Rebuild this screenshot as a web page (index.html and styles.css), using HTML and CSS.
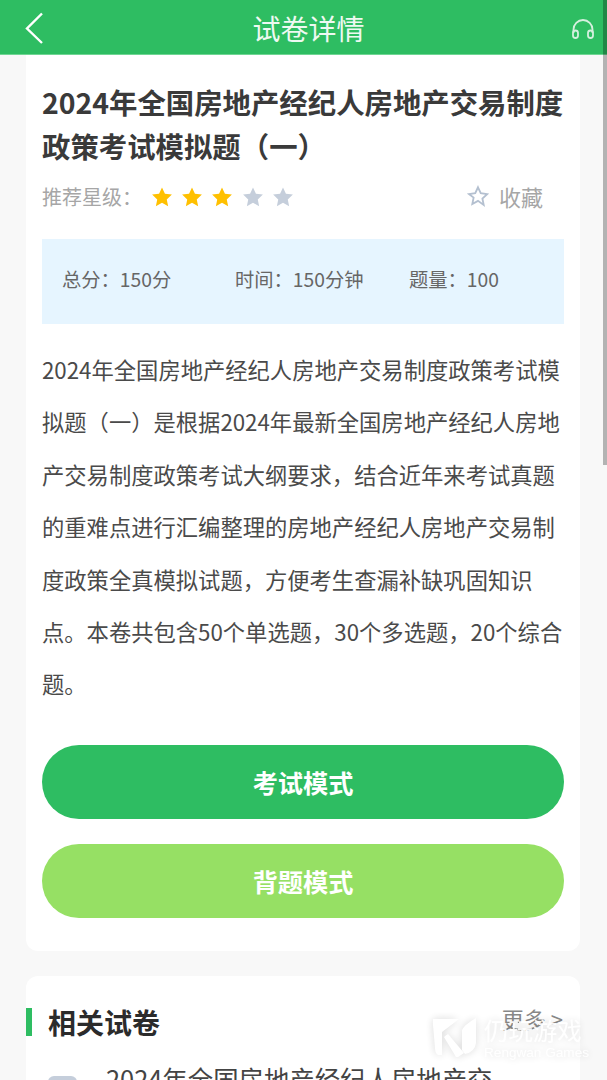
FILE: index.html
```html
<!DOCTYPE html>
<html lang="zh-CN">
<head>
  <meta charset="UTF-8" />
  <meta name="viewport" content="width=device-width, initial-scale=1.0" />
  <title>试卷详情</title>
  <link rel="stylesheet" href="styles.css">
</head>
<body>
  <div class="page">
    <header class="topbar">
      <svg class="back" width="20" height="32" viewBox="0 0 20 32"><path d="M18 1.5 3 16.5 18 31" fill="none" stroke="#fff" stroke-width="2.4"/></svg>
      <h1 class="topbar-title">试卷详情</h1>
      <svg class="headset" width="24" height="22" viewBox="0 0 24 22"><path d="M2.5 15V11.5a9.5 9.5 0 0 1 19 0V15" fill="none" stroke="#d5f0de" stroke-width="1.8"/><rect x="2" y="12.5" width="5" height="7.5" rx="2.5" fill="none" stroke="#d5f0de" stroke-width="1.8"/><rect x="17" y="12.5" width="5" height="7.5" rx="2.5" fill="none" stroke="#d5f0de" stroke-width="1.8"/></svg>
    </header>

    <div class="scroller-thumb"></div>

    <main class="content">
      <section class="card detail">
        <h2 class="paper-title">2024年全国房地产经纪人房地产交易制度政策考试模拟题（一）</h2>
        <div class="rating-row">
          <span class="rating-label">推荐星级：</span>
          <div class="stars">
            <svg class="star on" viewBox="0 0 24 24"><path d="M12 1.5l3.2 7 7.6.9-5.6 5.2 1.5 7.5L12 18.3l-6.7 3.8 1.5-7.5L1.2 9.4l7.6-.9z"/></svg>
            <svg class="star on" viewBox="0 0 24 24"><path d="M12 1.5l3.2 7 7.6.9-5.6 5.2 1.5 7.5L12 18.3l-6.7 3.8 1.5-7.5L1.2 9.4l7.6-.9z"/></svg>
            <svg class="star on" viewBox="0 0 24 24"><path d="M12 1.5l3.2 7 7.6.9-5.6 5.2 1.5 7.5L12 18.3l-6.7 3.8 1.5-7.5L1.2 9.4l7.6-.9z"/></svg>
            <svg class="star" viewBox="0 0 24 24"><path d="M12 1.5l3.2 7 7.6.9-5.6 5.2 1.5 7.5L12 18.3l-6.7 3.8 1.5-7.5L1.2 9.4l7.6-.9z"/></svg>
            <svg class="star" viewBox="0 0 24 24"><path d="M12 1.5l3.2 7 7.6.9-5.6 5.2 1.5 7.5L12 18.3l-6.7 3.8 1.5-7.5L1.2 9.4l7.6-.9z"/></svg>
          </div>
          <div class="collect">
            <svg class="collect-icon" viewBox="0 0 24 24"><path d="M12 2.5l3 6.5 7 .9-5.2 4.8 1.4 7L12 17.3l-6.2 3.4 1.4-7L2 9.9l7-.9z" fill="none" stroke="#b4c0d0" stroke-width="2"/></svg>
            <span>收藏</span>
          </div>
        </div>
        <div class="stats">
          <span class="stat-score">总分：150分</span>
          <span class="stat-time">时间：150分钟</span>
          <span>题量：100</span>
        </div>
        <p class="intro">2024年全国房地产经纪人房地产交易制度政策考试模拟题（一）是根据2024年最新全国房地产经纪人房地产交易制度政策考试大纲要求，结合近年来考试真题的重难点进行汇编整理的房地产经纪人房地产交易制度政策全真模拟试题，方便考生查漏补缺巩固知识点。本卷共包含50个单选题，30个多选题，20个综合题。</p>
        <button class="mode-btn exam">考试模式</button>
        <button class="mode-btn recite">背题模式</button>
      </section>

      <section class="card related">
        <div class="related-head">
          <h3 class="related-title">相关试卷</h3>
          <span class="more">更多 &gt;</span>
        </div>
        <div class="related-item">
          <span class="item-icon"></span>
          <span class="item-name">2024年全国房地产经纪人房地产交</span>
        </div>
      </section>
    </main>

    <div class="watermark">
      <svg class="wm-logo" width="45" height="40" viewBox="0 0 45 40"><path d="M1 2H27L10 15V38L6 38Q3 36 3 31L1 8zM12 20 16 17 32 36 26 40H24zM44 1V26Q43 35 33 37L30 33V13Q32 8 44 1z" fill="#fff"/></svg>
      <div class="wm-text">
        <span class="wm-cn">仍玩游戏</span>
        <span class="wm-en">Rengwan Games</span>
      </div>
    </div>
  </div>
</body>
</html>
```

FILE: styles.css
```css
html, body {
  margin: 0;
  padding: 0;
  height: 100%;
  overflow: hidden;
  font-family: "Noto Sans CJK SC", "Noto Sans", sans-serif;
  background: #f8f8f8;
}
.page {
  position: relative;
  width: 607px;
  height: 1080px;
  overflow: hidden;
}
.topbar {
  height: 54px;
  background: #2ebd62;
  border-bottom: 1px solid #6fd693;
  box-sizing: content-box;
  display: flex;
  align-items: center;
  justify-content: space-between;
  padding: 0 12px 0 24px;
}
.back {
  display: block;
  margin-top: 2px;
}
.topbar-title {
  margin: 0;
  padding: 2px 0 0 10px;
  font-size: 28px;
  font-weight: 400;
  color: #eef9f2;
  position: absolute;
  left: 0;
  right: 0;
  text-align: center;
}
.headset {
  display: block;
  margin-top: 4px;
}
.scroller-thumb {
  position: absolute;
  top: 0;
  right: 0;
  width: 4px;
  height: 465px;
  background: rgba(0, 0, 0, 0.28);
}
.content {
  padding: 0 27px 0 26px;
}
.card {
  background: #fff;
  border-radius: 12px;
}
.detail {
  border-radius: 0 0 12px 12px;
  padding: 25px 16px 33px;
}
.paper-title {
  margin: 0;
  font-size: 28.4px;
  line-height: 44px;
  font-weight: 700;
  color: #3a3a3a;
}
.rating-row {
  display: flex;
  align-items: center;
  margin-top: 5px;
  height: 46px;
}
.rating-label {
  font-size: 20px;
  color: #a6a6a6;
  width: 109px;
}
.stars {
  display: flex;
  gap: 8.2px;
  padding-top: 2px;
}
.star {
  width: 22px;
  height: 22px;
  fill: #c5cedb;
}
.star.on {
  fill: #ffc000;
}
.collect {
  margin-left: auto;
  margin-right: 21px;
  display: flex;
  align-items: center;
  gap: 10px;
  font-size: 22px;
  color: #a6a6a6;
}
.collect-icon {
  width: 22px;
  height: 22px;
}
.stats {
  margin-top: 20px;
  height: 85px;
  box-sizing: border-box;
  padding: 0 0 5px 20px;
  background: #e6f5ff;
  display: flex;
  align-items: center;
  font-size: 19.3px;
  color: #666;
}
.stat-score {
  width: 173px;
}
.stat-time {
  width: 174px;
}
.intro {
  margin: 19px 0 0;
  font-size: 22.3px;
  line-height: 52.4px;
  color: #4a4a4a;
}
.mode-btn {
  display: block;
  width: 100%;
  height: 74px;
  border: none;
  border-radius: 37px;
  color: #fff;
  font-family: inherit;
  font-size: 25.2px;
  font-weight: 700;
}
.exam {
  margin-top: 35px;
  background: #2ebd62;
}
.recite {
  margin-top: 25px;
  background: #96e064;
}
.related {
  margin-top: 25px;
  padding-top: 32px;
  height: 200px;
}
.related-head {
  display: flex;
  align-items: center;
  justify-content: space-between;
  border-left: 6px solid #2ebd62;
  height: 28px;
  padding: 0 17px 0 16px;
}
.related-title {
  margin: 0;
  font-size: 28px;
  font-weight: 700;
  color: #2b2b2b;
}
.more {
  font-size: 22px;
  color: #888;
  position: relative;
  top: -4px;
}
.related-item {
  display: flex;
  align-items: flex-start;
  margin-top: 25px;
  padding-left: 22px;
}
.item-icon {
  width: 29px;
  height: 30px;
  margin-top: 15px;
  border-radius: 6px;
  background: #c5cedb;
  flex: none;
}
.item-name {
  margin-left: 29px;
  font-size: 25.4px;
  line-height: 34px;
  color: #444;
  white-space: nowrap;
}
.watermark {
  position: absolute;
  left: 432px;
  top: 1017px;
  display: flex;
  gap: 7px;
  color: #fff;
  opacity: 0.92;
  filter: drop-shadow(0 0 4px rgba(0, 0, 0, 0.16));
}
.wm-logo {
  display: block;
}
.wm-text {
  display: flex;
  flex-direction: column;
}
.wm-cn {
  font-size: 24.4px;
  line-height: 26px;
}
.wm-en {
  font-size: 13.6px;
  line-height: 16px;
  margin-top: 2px;
  font-family: "Liberation Sans", sans-serif;
  white-space: nowrap;
}
```
